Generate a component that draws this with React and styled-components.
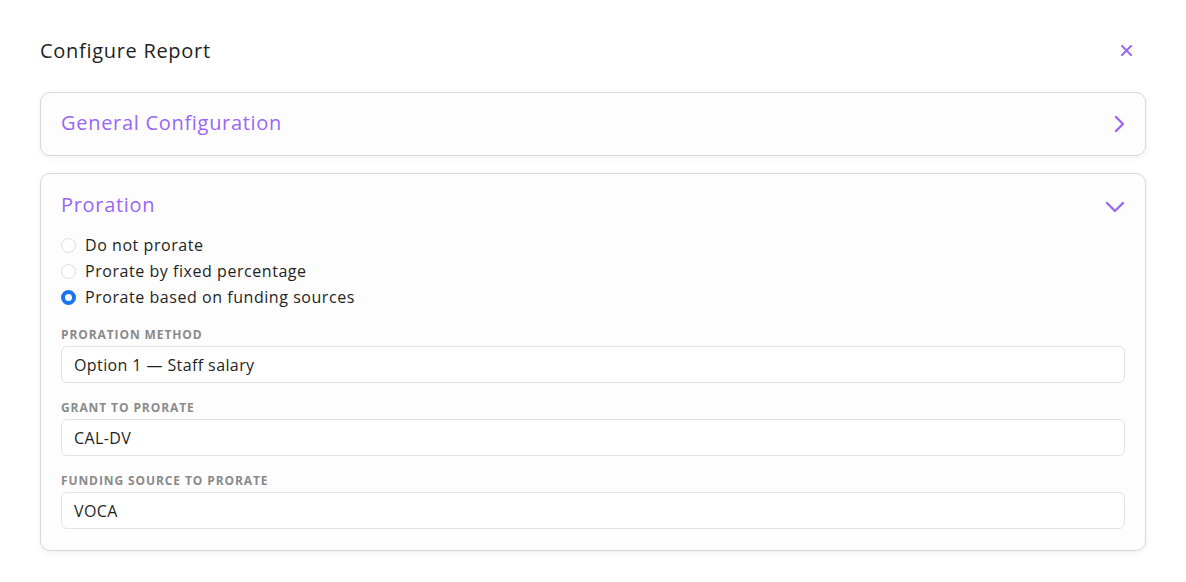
import React, { useState } from 'react'
import styled, { createGlobalStyle } from 'styled-components'

const GlobalStyle = createGlobalStyle`
    body {
        margin: 0;
        background: #ffffff;
        font-family: "Open Sans", Lato, sans-serif;
        color: #1f1f1f;
    }
`

const Page = styled.div`
    padding: 39px 40px 30px;
`

const Header = styled.div`
    display: flex;
    align-items: center;
    justify-content: space-between;
    height: 22px;
    margin-bottom: 31px;
`

const Title = styled.h2`
    margin: 0;
    font-size: 20px;
    font-weight: 500;
    color: #1f1f1f;
    letter-spacing: 0.7px;
`

const CloseButton = styled.button`
    border: 0;
    background: none;
    padding: 0;
    margin-right: 14px;
    display: flex;
    cursor: pointer;
    color: #9a67f5;
`

const Card = styled.div`
    border: 1px solid #d8d8d8;
    border-radius: 10px;
    background: #fdfdfd;
    box-shadow: 0 2px 6px rgba(0, 0, 0, 0.06);
    padding: ${p => p.$open ? '18px 20px 21px' : '0 20px'};
    margin-bottom: 17px;
`

const CardHead = styled.div`
    display: flex;
    align-items: center;
    justify-content: space-between;
    height: ${p => p.$open ? '24px' : '62px'};
    cursor: pointer;
`

const CardTitle = styled.h3`
    margin: ${p => p.$open ? '2px 0 0' : '0 0 2px'};
    font-size: 20px;
    line-height: 24px;
    font-weight: 500;
    color: #9a67f5;
    letter-spacing: 0.7px;
`

const Chevron = styled.span`
    display: flex;
    color: #9a67f5;
    margin-top: ${p => p.$down ? '6px' : '0'};
    margin-right: ${p => p.$down ? '0' : '-1px'};
`

const RadioList = styled.div`
    margin-top: 16px;
    display: flex;
    flex-direction: column;
`

const RadioRow = styled.label`
    display: flex;
    align-items: center;
    height: 26px;
    gap: 9px;
    font-size: 16px;
    font-weight: 500;
    letter-spacing: 0.55px;
    color: #1f1f1f;
    cursor: pointer;
`

const RadioDot = styled.span`
    width: 15px;
    height: 15px;
    box-sizing: border-box;
    border-radius: 50%;
    border: ${p => p.$checked ? '4px solid #1a73f0' : '1px solid #dcdcdc'};
    background: #fff;
`

const Field = styled.div`
    margin-top: 17px;
    & + & {
        margin-top: 17px;
    }
`

const FieldLabel = styled.div`
    font-size: 12px;
    line-height: 16px;
    font-weight: 700;
    color: #8a8a8a;
    letter-spacing: 0.9px;
    text-transform: uppercase;
    margin-bottom: 3px;
`

const FieldBox = styled.div`
    height: 37px;
    box-sizing: border-box;
    border: 1px solid #e3e3e3;
    border-radius: 6px;
    background: #fff;
    display: flex;
    align-items: center;
    padding: 0 12px;
    font-size: 16px;
    font-weight: 500;
    letter-spacing: 0.4px;
    color: #1f1f1f;
`

const options = [
    'Do not prorate',
    'Prorate by fixed percentage',
    'Prorate based on funding sources',
]

const fields = [
    ['Proration method', 'Option 1 — Staff salary'],
    ['Grant to prorate', 'CAL-DV'],
    ['Funding source to prorate', 'VOCA'],
]

export default function App() {
    const [choice, setChoice] = useState(2)

    return (
        <Page>
            <GlobalStyle />
            <Header>
                <Title>Configure Report</Title>
                <CloseButton aria-label="Close">
                    <svg width="11" height="11" viewBox="0 0 11 11" fill="none" stroke="currentColor" strokeWidth="2" strokeLinecap="round">
                        <path d="M1 1l9 9M10 1l-9 9" />
                    </svg>
                </CloseButton>
            </Header>

            <Card>
                <CardHead>
                    <CardTitle>General Configuration</CardTitle>
                    <Chevron>
                        <svg width="14" height="18" viewBox="0 0 14 18" fill="none" stroke="currentColor" strokeWidth="2.4" strokeLinecap="round" strokeLinejoin="round">
                            <path d="M4 2l7 7-7 7" />
                        </svg>
                    </Chevron>
                </CardHead>
            </Card>

            <Card $open>
                <CardHead $open>
                    <CardTitle $open>Proration</CardTitle>
                    <Chevron $down>
                        <svg width="20" height="14" viewBox="0 0 20 14" fill="none" stroke="currentColor" strokeWidth="2.4" strokeLinecap="round" strokeLinejoin="round">
                            <path d="M2 3l8 8 8-8" />
                        </svg>
                    </Chevron>
                </CardHead>

                <RadioList>
                    {options.map((o, i) => (
                        <RadioRow key={o} onClick={() => setChoice(i)}>
                            <RadioDot $checked={choice === i} />
                            {o}
                        </RadioRow>
                    ))}
                </RadioList>

                {fields.map(([label, value]) => (
                    <Field key={label}>
                        <FieldLabel>{label}</FieldLabel>
                        <FieldBox>{value}</FieldBox>
                    </Field>
                ))}
            </Card>
        </Page>
    )
}
